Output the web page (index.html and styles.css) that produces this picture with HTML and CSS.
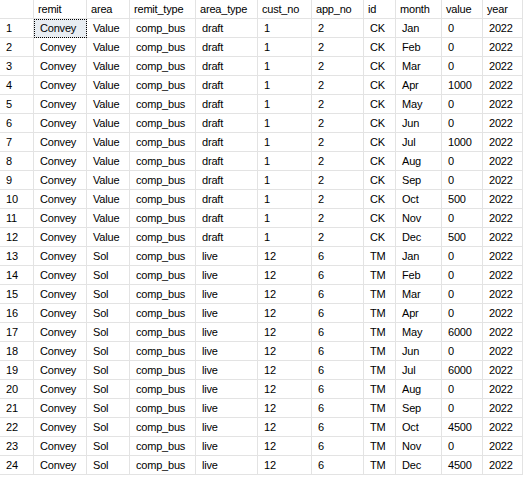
FILE: index.html
```html
<!DOCTYPE html>
<html>
<head>
<meta charset="utf-8">
<link rel="stylesheet" href="styles.css">
</head>
<body>
<div class="grid" id="grid">
  <div class="hd corner"></div>
  <div class="hd">remit</div>
  <div class="hd">area</div>
  <div class="hd">remit_type</div>
  <div class="hd">area_type</div>
  <div class="hd">cust_no</div>
  <div class="hd">app_no</div>
  <div class="hd">id</div>
  <div class="hd">month</div>
  <div class="hd">value</div>
  <div class="hd">year</div>

  <div class="rn">1</div><div class="c sel">Convey</div><div class="c">Value</div><div class="c">comp_bus</div><div class="c">draft</div><div class="c">1</div><div class="c">2</div><div class="c">CK</div><div class="c">Jan</div><div class="c">0</div><div class="c">2022</div>
  <div class="rn">2</div><div class="c">Convey</div><div class="c">Value</div><div class="c">comp_bus</div><div class="c">draft</div><div class="c">1</div><div class="c">2</div><div class="c">CK</div><div class="c">Feb</div><div class="c">0</div><div class="c">2022</div>
  <div class="rn">3</div><div class="c">Convey</div><div class="c">Value</div><div class="c">comp_bus</div><div class="c">draft</div><div class="c">1</div><div class="c">2</div><div class="c">CK</div><div class="c">Mar</div><div class="c">0</div><div class="c">2022</div>
  <div class="rn">4</div><div class="c">Convey</div><div class="c">Value</div><div class="c">comp_bus</div><div class="c">draft</div><div class="c">1</div><div class="c">2</div><div class="c">CK</div><div class="c">Apr</div><div class="c">1000</div><div class="c">2022</div>
  <div class="rn">5</div><div class="c">Convey</div><div class="c">Value</div><div class="c">comp_bus</div><div class="c">draft</div><div class="c">1</div><div class="c">2</div><div class="c">CK</div><div class="c">May</div><div class="c">0</div><div class="c">2022</div>
  <div class="rn">6</div><div class="c">Convey</div><div class="c">Value</div><div class="c">comp_bus</div><div class="c">draft</div><div class="c">1</div><div class="c">2</div><div class="c">CK</div><div class="c">Jun</div><div class="c">0</div><div class="c">2022</div>
  <div class="rn">7</div><div class="c">Convey</div><div class="c">Value</div><div class="c">comp_bus</div><div class="c">draft</div><div class="c">1</div><div class="c">2</div><div class="c">CK</div><div class="c">Jul</div><div class="c">1000</div><div class="c">2022</div>
  <div class="rn">8</div><div class="c">Convey</div><div class="c">Value</div><div class="c">comp_bus</div><div class="c">draft</div><div class="c">1</div><div class="c">2</div><div class="c">CK</div><div class="c">Aug</div><div class="c">0</div><div class="c">2022</div>
  <div class="rn">9</div><div class="c">Convey</div><div class="c">Value</div><div class="c">comp_bus</div><div class="c">draft</div><div class="c">1</div><div class="c">2</div><div class="c">CK</div><div class="c">Sep</div><div class="c">0</div><div class="c">2022</div>
  <div class="rn">10</div><div class="c">Convey</div><div class="c">Value</div><div class="c">comp_bus</div><div class="c">draft</div><div class="c">1</div><div class="c">2</div><div class="c">CK</div><div class="c">Oct</div><div class="c">500</div><div class="c">2022</div>
  <div class="rn">11</div><div class="c">Convey</div><div class="c">Value</div><div class="c">comp_bus</div><div class="c">draft</div><div class="c">1</div><div class="c">2</div><div class="c">CK</div><div class="c">Nov</div><div class="c">0</div><div class="c">2022</div>
  <div class="rn">12</div><div class="c">Convey</div><div class="c">Value</div><div class="c">comp_bus</div><div class="c">draft</div><div class="c">1</div><div class="c">2</div><div class="c">CK</div><div class="c">Dec</div><div class="c">500</div><div class="c">2022</div>
  <div class="rn">13</div><div class="c">Convey</div><div class="c">Sol</div><div class="c">comp_bus</div><div class="c">live</div><div class="c">12</div><div class="c">6</div><div class="c">TM</div><div class="c">Jan</div><div class="c">0</div><div class="c">2022</div>
  <div class="rn">14</div><div class="c">Convey</div><div class="c">Sol</div><div class="c">comp_bus</div><div class="c">live</div><div class="c">12</div><div class="c">6</div><div class="c">TM</div><div class="c">Feb</div><div class="c">0</div><div class="c">2022</div>
  <div class="rn">15</div><div class="c">Convey</div><div class="c">Sol</div><div class="c">comp_bus</div><div class="c">live</div><div class="c">12</div><div class="c">6</div><div class="c">TM</div><div class="c">Mar</div><div class="c">0</div><div class="c">2022</div>
  <div class="rn">16</div><div class="c">Convey</div><div class="c">Sol</div><div class="c">comp_bus</div><div class="c">live</div><div class="c">12</div><div class="c">6</div><div class="c">TM</div><div class="c">Apr</div><div class="c">0</div><div class="c">2022</div>
  <div class="rn">17</div><div class="c">Convey</div><div class="c">Sol</div><div class="c">comp_bus</div><div class="c">live</div><div class="c">12</div><div class="c">6</div><div class="c">TM</div><div class="c">May</div><div class="c">6000</div><div class="c">2022</div>
  <div class="rn">18</div><div class="c">Convey</div><div class="c">Sol</div><div class="c">comp_bus</div><div class="c">live</div><div class="c">12</div><div class="c">6</div><div class="c">TM</div><div class="c">Jun</div><div class="c">0</div><div class="c">2022</div>
  <div class="rn">19</div><div class="c">Convey</div><div class="c">Sol</div><div class="c">comp_bus</div><div class="c">live</div><div class="c">12</div><div class="c">6</div><div class="c">TM</div><div class="c">Jul</div><div class="c">6000</div><div class="c">2022</div>
  <div class="rn">20</div><div class="c">Convey</div><div class="c">Sol</div><div class="c">comp_bus</div><div class="c">live</div><div class="c">12</div><div class="c">6</div><div class="c">TM</div><div class="c">Aug</div><div class="c">0</div><div class="c">2022</div>
  <div class="rn">21</div><div class="c">Convey</div><div class="c">Sol</div><div class="c">comp_bus</div><div class="c">live</div><div class="c">12</div><div class="c">6</div><div class="c">TM</div><div class="c">Sep</div><div class="c">0</div><div class="c">2022</div>
  <div class="rn">22</div><div class="c">Convey</div><div class="c">Sol</div><div class="c">comp_bus</div><div class="c">live</div><div class="c">12</div><div class="c">6</div><div class="c">TM</div><div class="c">Oct</div><div class="c">4500</div><div class="c">2022</div>
  <div class="rn">23</div><div class="c">Convey</div><div class="c">Sol</div><div class="c">comp_bus</div><div class="c">live</div><div class="c">12</div><div class="c">6</div><div class="c">TM</div><div class="c">Nov</div><div class="c">0</div><div class="c">2022</div>
  <div class="rn">24</div><div class="c">Convey</div><div class="c">Sol</div><div class="c">comp_bus</div><div class="c">live</div><div class="c">12</div><div class="c">6</div><div class="c">TM</div><div class="c">Dec</div><div class="c">4500</div><div class="c">2022</div>
</div>
</body>
</html>
```
FILE: styles.css
```css
html, body {
  margin: 0;
  padding: 0;
  background: #ffffff;
}
body {
  font-family: "Liberation Sans", Arial, sans-serif;
  font-size: 11px;
  color: #000000;
  width: 524px;
  height: 478px;
  overflow: hidden;
}
.grid {
  display: grid;
  grid-template-columns: 34px 53px 43px 66px 62px 54px 52px 32px 46px 41px 40px;
  grid-auto-rows: 19px;
  width: 523px;
}
.grid > div {
  box-sizing: border-box;
  border-right: 1px solid #e3e3e3;
  border-bottom: 1px solid #e3e3e3;
  line-height: 18px;
  white-space: nowrap;
  overflow: hidden;
  letter-spacing: -0.2px;
}
.hd {
  padding-left: 4px;
  padding-top: 0px;
}
.rn {
  padding-left: 6px;
}
.c {
  padding-left: 6px;
}
.sel {
  background: #e8edf2;
  outline: 1px dotted #000000;
  outline-offset: -1px;
}
```
